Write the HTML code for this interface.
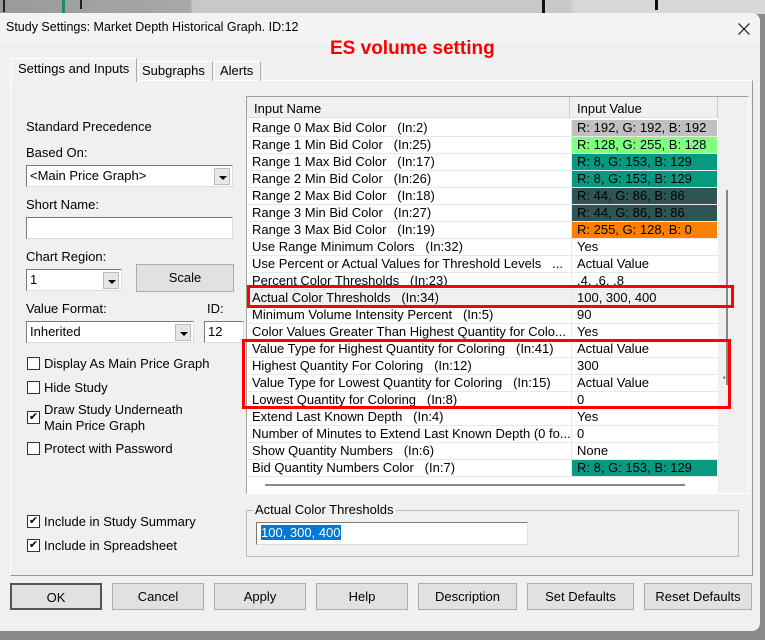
<!DOCTYPE html>
<html><head><meta charset="utf-8"><style>
*{box-sizing:border-box;margin:0;padding:0}
body{width:765px;height:640px;position:relative;overflow:hidden;background:#8a8a8a;font-family:"Liberation Sans",sans-serif;font-size:12.5px;color:#000}
.a{position:absolute}
#top{left:0;top:0;width:765px;height:14px;background:linear-gradient(90deg,#9a9a9a 0,#a8a8a8 190px,#c8c8c8 193px,#c8c8c8 570px,#d8d8d8 575px)}
#dlg{left:0;top:13px;width:760px;height:618px;background:#f0f0f0;border-radius:0 8px 8px 0}
.t{white-space:nowrap}
.btn{position:absolute;top:583px;height:27px;background:#e1e1e1;border:1px solid #adadad;text-align:center;line-height:25px;font-size:13px}
.cb{position:absolute;width:13px;height:13px;border:1px solid #333;background:#fff;font-size:11px;line-height:11px;text-align:center}
.in{position:absolute;background:#fff;border:1px solid #7a7a7a;border-right-color:#ddd;border-bottom-color:#ddd;height:22px;line-height:20px;padding-left:3px;font-size:13px}
.dd{position:absolute;top:2px;right:2px;width:16px;height:17px;background:#e6e6e6;border:1px solid #bbb}
.dd:after{content:"";position:absolute;left:4px;top:7px;border:4px solid transparent;border-top:4px solid #000;border-bottom:0}
.row{position:absolute;left:248px;width:470px;height:17px;border-bottom:1px solid #e8e8e8;font-size:13px;line-height:16px}
.row span{position:absolute;left:4px;white-space:nowrap}
.row b{position:absolute;left:324px;width:145px;height:16px;font-weight:normal;padding-left:5px;white-space:nowrap}
.row i{position:absolute;left:323px;top:0;width:1px;height:17px;background:#e8e8e8}
</style></head><body>
<div id="top" class="a"></div>
<div class="a" style="left:3px;top:0;width:2px;height:12px;background:#222"></div>
<div class="a" style="left:62px;top:0;width:3px;height:13px;background:#1a8a70"></div>
<div class="a" style="left:80px;top:0;width:2px;height:9px;background:#222"></div>
<div class="a" style="left:542px;top:0;width:3px;height:13px;background:#111"></div>
<div class="a" style="left:655px;top:0;width:3px;height:10px;background:#111"></div>
<div id="dlg" class="a"></div>
<div class="a" style="left:0;top:13px;width:760px;height:30px;background:#f3f3f3;border-radius:0 8px 0 0"></div>
<div class="a t" style="left:6px;top:20px;font-size:12.5px">Study Settings: Market Depth Historical Graph. ID:12</div>
<svg class="a" style="left:738px;top:23px" width="12" height="12"><path d="M0.5 0.5L11.5 11.5M11.5 0.5L0.5 11.5" stroke="#111" stroke-width="1.2"/></svg>
<div class="a t" style="left:330px;top:38px;color:#f00;font-weight:bold;font-size:19px">ES volume setting</div>
<!-- tab panel -->
<div class="a" style="left:10px;top:80px;width:743px;height:496px;border:1px solid #adadad;border-left-color:#fff;border-top-color:#fff;border-right-color:#999;border-bottom-color:#999"></div>
<div class="a" style="left:11px;top:58px;width:126px;height:24px;background:#f0f0f0;border:1px solid #adadad;border-bottom:none;border-left-color:#fff;border-top-color:#fff"></div>
<div class="a t" style="left:18px;top:61px;font-size:13px">Settings and Inputs</div>
<div class="a" style="left:138px;top:61px;width:75px;height:20px;border:1px solid #adadad;border-bottom:none;border-left-color:#fff;border-top-color:#fff"></div>
<div class="a t" style="left:142px;top:63px;font-size:13px">Subgraphs</div>
<div class="a" style="left:214px;top:61px;width:47px;height:20px;border:1px solid #adadad;border-bottom:none;border-left-color:#fff;border-top-color:#fff"></div>
<div class="a t" style="left:220px;top:63px;font-size:13px">Alerts</div>
<!-- left form -->
<div class="a t" style="left:26px;top:119px;font-size:13px">Standard Precedence</div>
<div class="a t" style="left:26px;top:145px;font-size:13px">Based On:</div>
<div class="in" style="left:26px;top:165px;width:207px">&lt;Main Price Graph&gt;<div class="dd"></div></div>
<div class="a t" style="left:26px;top:197px;font-size:13px">Short Name:</div>
<div class="in" style="left:26px;top:217px;width:207px"></div>
<div class="a t" style="left:26px;top:249px;font-size:13px">Chart Region:</div>
<div class="in" style="left:26px;top:269px;width:96px">1<div class="dd"></div></div>
<div class="btn" style="left:136px;top:264px;width:98px;height:28px;line-height:26px">Scale</div>
<div class="a t" style="left:26px;top:301px;font-size:13px">Value Format:</div>
<div class="a t" style="left:207px;top:301px;font-size:13px">ID:</div>
<div class="in" style="left:26px;top:321px;width:168px">Inherited<div class="dd"></div></div>
<div class="in" style="left:204px;top:321px;width:40px">12</div>
<div class="cb" style="left:27px;top:357px"></div><div class="a t" style="left:44px;top:356px;font-size:13px">Display As Main Price Graph</div>
<div class="cb" style="left:27px;top:381px"></div><div class="a t" style="left:44px;top:380px;font-size:13px">Hide Study</div>
<div class="cb" style="left:27px;top:411px">✔</div><div class="a" style="left:44px;top:402px;font-size:13px;line-height:16px">Draw Study Underneath<br>Main Price Graph</div>
<div class="cb" style="left:27px;top:442px"></div><div class="a t" style="left:44px;top:441px;font-size:13px">Protect with Password</div>
<div class="cb" style="left:27px;top:515px">✔</div><div class="a t" style="left:44px;top:514px;font-size:13px">Include in Study Summary</div>
<div class="cb" style="left:27px;top:539px">✔</div><div class="a t" style="left:44px;top:538px;font-size:13px">Include in Spreadsheet</div>
<!-- list -->
<div class="a" style="left:246px;top:96px;width:503px;height:398px;background:#fff;border:1px solid #a0a0a0;border-right-color:#fff;border-bottom-color:#fff"></div>
<div class="a" style="left:718px;top:97px;width:30px;height:396px;background:#f0f0f0"></div>
<div class="a" style="left:726px;top:190px;width:2px;height:195px;background:#888"></div>
<div class="a" style="left:723px;top:376px;font-size:9px">˚</div>
<div class="a" style="left:247px;top:97px;width:471px;height:21px;background:#f0f0f0;border-bottom:1px solid #ddd"></div>
<div class="a" style="left:569px;top:97px;width:1px;height:21px;background:#ccc"></div>
<div class="a" style="left:717px;top:97px;width:1px;height:21px;background:#ccc"></div>
<div class="a t" style="left:254px;top:101px;font-size:13px">Input Name</div>
<div class="a t" style="left:577px;top:101px;font-size:13px">Input Value</div>
<div class="row" style="top:120px"><span>Range 0 Max Bid Color &nbsp; (In:2)</span><i></i><b style="background:#c0c0c0">R: 192, G: 192, B: 192</b></div>
<div class="row" style="top:137px"><span>Range 1 Min Bid Color &nbsp; (In:25)</span><i></i><b style="background:#80ff80">R: 128, G: 255, B: 128</b></div>
<div class="row" style="top:154px"><span>Range 1 Max Bid Color &nbsp; (In:17)</span><i></i><b style="background:#089981">R: 8, G: 153, B: 129</b></div>
<div class="row" style="top:171px"><span>Range 2 Min Bid Color &nbsp; (In:26)</span><i></i><b style="background:#089981">R: 8, G: 153, B: 129</b></div>
<div class="row" style="top:188px"><span>Range 2 Max Bid Color &nbsp; (In:18)</span><i></i><b style="background:#2c5656">R: 44, G: 86, B: 86</b></div>
<div class="row" style="top:205px"><span>Range 3 Min Bid Color &nbsp; (In:27)</span><i></i><b style="background:#2c5656">R: 44, G: 86, B: 86</b></div>
<div class="row" style="top:222px"><span>Range 3 Max Bid Color &nbsp; (In:19)</span><i></i><b style="background:#ff8000">R: 255, G: 128, B: 0</b></div>
<div class="row" style="top:239px"><span>Use Range Minimum Colors &nbsp; (In:32)</span><i></i><b>Yes</b></div>
<div class="row" style="top:256px"><span>Use Percent or Actual Values for Threshold Levels &nbsp; ...</span><i></i><b>Actual Value</b></div>
<div class="row" style="top:273px"><span>Percent Color Thresholds &nbsp; (In:23)</span><i></i><b>.4, .6, .8</b></div>
<div class="row" style="top:290px;background:#f0f0f0"><span>Actual Color Thresholds &nbsp; (In:34)</span><i></i><b>100, 300, 400</b></div>
<div class="row" style="top:307px"><span>Minimum Volume Intensity Percent &nbsp; (In:5)</span><i></i><b>90</b></div>
<div class="row" style="top:324px"><span>Color Values Greater Than Highest Quantity for Colo...</span><i></i><b>Yes</b></div>
<div class="row" style="top:341px"><span>Value Type for Highest Quantity for Coloring &nbsp; (In:41)</span><i></i><b>Actual Value</b></div>
<div class="row" style="top:358px"><span>Highest Quantity For Coloring &nbsp; (In:12)</span><i></i><b>300</b></div>
<div class="row" style="top:375px"><span>Value Type for Lowest Quantity for Coloring &nbsp; (In:15)</span><i></i><b>Actual Value</b></div>
<div class="row" style="top:392px"><span>Lowest Quantity for Coloring &nbsp; (In:8)</span><i></i><b>0</b></div>
<div class="row" style="top:409px"><span>Extend Last Known Depth &nbsp; (In:4)</span><i></i><b>Yes</b></div>
<div class="row" style="top:426px"><span>Number of Minutes to Extend Last Known Depth (0 fo...</span><i></i><b>0</b></div>
<div class="row" style="top:443px"><span>Show Quantity Numbers &nbsp; (In:6)</span><i></i><b>None</b></div>
<div class="row" style="top:460px"><span>Bid Quantity Numbers Color &nbsp; (In:7)</span><i></i><b style="background:#089981">R: 8, G: 153, B: 129</b></div>
<div class="a" style="left:265px;top:484px;width:420px;height:2px;background:#888"></div>
<!-- red boxes -->
<div class="a" style="left:247px;top:285px;width:487px;height:23px;border:3px solid #f00"></div>
<div class="a" style="left:242px;top:339px;width:489px;height:70px;border:3px solid #f00"></div>
<!-- group -->
<div class="a" style="left:246px;top:510px;width:493px;height:47px;border:1px solid #bbb"></div>
<div class="a t" style="left:253px;top:502px;background:#f0f0f0;padding:0 2px;font-size:13px">Actual Color Thresholds</div>
<div class="in" style="left:256px;top:522px;width:272px;height:23px;padding-left:4px"><span style="background:#0078d7;color:#fff;font-size:13px">100, 300, 400</span></div>
<!-- buttons -->
<div class="btn" style="left:10px;width:92px;border:2px solid #555">OK</div>
<div class="btn" style="left:112px;width:92px">Cancel</div>
<div class="btn" style="left:214px;width:92px">Apply</div>
<div class="btn" style="left:316px;width:92px">Help</div>
<div class="btn" style="left:418px;width:99px">Description</div>
<div class="btn" style="left:527px;width:107px">Set Defaults</div>
<div class="btn" style="left:644px;width:108px">Reset Defaults</div>
</body></html>
